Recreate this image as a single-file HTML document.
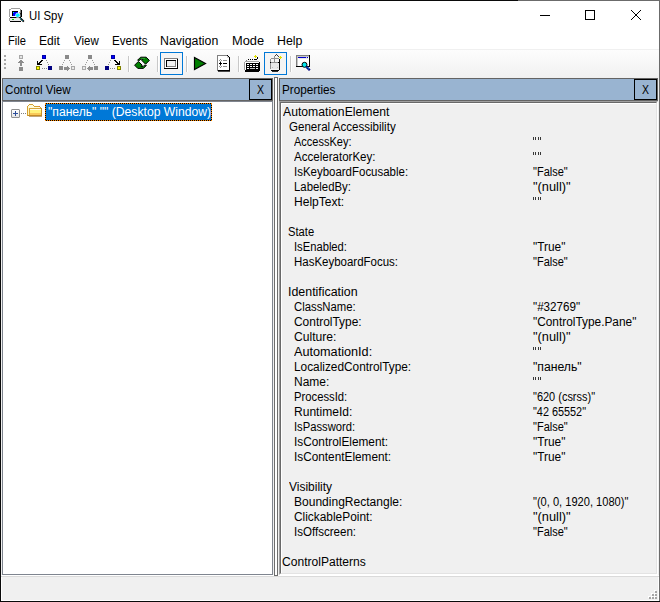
<!DOCTYPE html>
<html><head><meta charset="utf-8">
<style>
*{margin:0;padding:0;box-sizing:border-box}
html,body{width:660px;height:602px;overflow:hidden;background:#f0f0f0}
body{font-family:"Liberation Sans",sans-serif;font-size:11.5px;color:#000;position:relative}
.a{position:absolute}
.t{position:absolute;white-space:pre;line-height:15px}
.m{position:absolute;white-space:pre;font-size:12px;line-height:15px;top:33px}
svg{position:absolute;overflow:visible}
.q{position:absolute;white-space:pre;line-height:15px;font-size:12px;transform-origin:0 0}
</style></head><body>
<!-- title bar -->
<div class="a" style="left:0;top:0;width:660px;height:49px;background:#fff"></div>
<!-- title icon -->
<svg style="left:0;top:0" width="30" height="30" viewBox="0 0 30 30" shape-rendering="crispEdges">
 <path d="M11 8h9v1h1v1h-1v-1h-9v1h-1v7h-1v-8h1z" fill="#a0a0a0"/>
 <rect x="11" y="9" width="9" height="8" fill="#fff"/>
 <rect x="20" y="9" width="1" height="8" fill="#808080"/>
 <rect x="21" y="10" width="1" height="7" fill="#000"/>
 <rect x="12" y="11" width="6" height="5" fill="#0000ff"/>
 <rect x="12" y="11" width="6" height="1" fill="#000"/>
 <rect x="12" y="11" width="1" height="5" fill="#000"/>
 <rect x="13" y="12" width="1" height="1" fill="#00e0ff"/>
 <rect x="10" y="17" width="11" height="1" fill="#000"/>
 <rect x="9" y="18" width="12" height="3" fill="#e8e8e8"/>
 <rect x="9" y="18" width="1" height="3" fill="#a0a0a0"/>
 <rect x="10" y="21" width="11" height="1" fill="#000"/>
 <rect x="12" y="19" width="2" height="1" fill="#00d000"/>
</svg>
<svg style="left:0;top:0" width="30" height="30" viewBox="0 0 30 30">
 <circle cx="17.8" cy="15.3" r="2.3" fill="#00f0ff" stroke="#fff" stroke-width="0.6"/>
 <path d="M19.6 12.8 A2.9 2.9 0 0 1 20.2 17.6" stroke="#000" stroke-width="1" fill="none"/>
 <path d="M20.3 18.2 L23.8 21.7" stroke="#000" stroke-width="1.8"/>
 <path d="M20.5 18.4 L23.3 21.2" stroke="#00e0ff" stroke-width="1" stroke-dasharray="1 1"/>
 <path d="M19 16 L18 17" stroke="#c0c0c0" stroke-width="0.8" stroke-opacity="0.6"/>
</svg>
<!-- caption buttons -->
<div class="a" style="left:540px;top:15px;width:10px;height:1px;background:#000"></div>
<div class="a" style="left:585px;top:10px;width:10px;height:10px;border:1px solid #000"></div>
<svg style="left:631px;top:10px" width="10" height="10" viewBox="0 0 10 10"><path d="M0 0L10 10M10 0L0 10" stroke="#000" stroke-width="1"/></svg>
<!-- menu -->
<!-- toolbar -->
<div class="a" style="left:0;top:49px;width:660px;height:1px;background:#f0f0f0"></div>
<div class="a" style="left:0;top:50px;width:660px;height:27px;background:linear-gradient(#fdfdfd,#f1f1f1)"></div>
<svg style="left:0;top:0" width="330" height="80" viewBox="0 0 330 80" shape-rendering="crispEdges">
 <!-- grip -->
 <g fill="#a6a6a6"><rect x="4" y="55" width="2" height="2"/><rect x="4" y="59" width="2" height="2"/><rect x="4" y="63" width="2" height="2"/><rect x="4" y="67" width="2" height="2"/></g>
 <!-- icon1 parent (disabled) -->
 <rect x="19.5" y="55.5" width="3" height="3" fill="#e4e4e4" stroke="#a8a8a8"/>
 <g fill="#8c8c8c"><rect x="20" y="60" width="2" height="1"/><rect x="19" y="61" width="4" height="1"/><rect x="18" y="62" width="6" height="1"/><rect x="20" y="63" width="2" height="3"/></g>
 <rect x="19" y="67" width="4" height="4" fill="#8a8a8a"/>
 <!-- icon2 first child -->
 <rect x="42.5" y="55.5" width="3" height="3" fill="#0000ff" stroke="#0000a8"/>
 <g fill="#8a8a8a"><rect x="46" y="60" width="1" height="1"/><rect x="47" y="62" width="1" height="1"/><rect x="48" y="64" width="1" height="1"/><rect x="42" y="68" width="1" height="1"/><rect x="44" y="68" width="1" height="1"/><rect x="46" y="68" width="1" height="1"/></g>
 <g fill="#000"><rect x="41" y="60" width="2" height="1"/><rect x="40" y="61" width="2" height="1"/><rect x="39" y="62" width="2" height="1"/><rect x="38" y="63" width="2" height="1"/><rect x="37" y="61" width="1" height="4"/><rect x="37" y="64" width="5" height="1"/></g>
 <rect x="36.5" y="66.5" width="3" height="3" fill="#ffff00" stroke="#808000"/>
 <rect x="48" y="66" width="4" height="4" fill="#000080"/>
 <!-- icon3 next sibling (disabled) -->
 <rect x="65" y="55" width="4" height="4" fill="#8a8a8a"/>
 <g fill="#9a9a9a"><rect x="64" y="60" width="1" height="1"/><rect x="63" y="62" width="1" height="1"/><rect x="62" y="64" width="1" height="1"/><rect x="69" y="60" width="1" height="1"/><rect x="70" y="62" width="1" height="1"/><rect x="71" y="64" width="1" height="1"/></g>
 <rect x="59" y="66" width="4" height="4" fill="#8a8a8a"/>
 <rect x="71.5" y="66.5" width="3" height="3" fill="#e8e8e8" stroke="#a8a8a8"/>
 <path d="M64 67h3v-1h1v1h1v1h1v1h-1v1h-1v1h-1v-1h-3z" fill="#8c8c8c"/>
 <!-- icon4 prev sibling (disabled) -->
 <rect x="88" y="55" width="4" height="4" fill="#8a8a8a"/>
 <g fill="#9a9a9a"><rect x="87" y="60" width="1" height="1"/><rect x="86" y="62" width="1" height="1"/><rect x="85" y="64" width="1" height="1"/><rect x="92" y="60" width="1" height="1"/><rect x="93" y="62" width="1" height="1"/><rect x="94" y="64" width="1" height="1"/></g>
 <rect x="82.5" y="66.5" width="3" height="3" fill="#e8e8e8" stroke="#a8a8a8"/>
 <rect x="94" y="66" width="4" height="4" fill="#8a8a8a"/>
 <path d="M93 67h-3v-1h-1v1h-1v1h-1v1h1v1h1v1h1v-1h3z" fill="#8c8c8c"/>
 <!-- icon5 last child -->
 <rect x="111.5" y="55.5" width="3" height="3" fill="#0000ff" stroke="#0000a8"/>
 <g fill="#8a8a8a"><rect x="110" y="60" width="1" height="1"/><rect x="109" y="62" width="1" height="1"/><rect x="108" y="64" width="1" height="1"/><rect x="110" y="68" width="1" height="1"/><rect x="112" y="68" width="1" height="1"/><rect x="114" y="68" width="1" height="1"/></g>
 <g fill="#000"><rect x="114" y="60" width="2" height="1"/><rect x="115" y="61" width="2" height="1"/><rect x="116" y="62" width="2" height="1"/><rect x="117" y="63" width="2" height="1"/><rect x="119" y="61" width="1" height="4"/><rect x="115" y="64" width="5" height="1"/></g>
 <rect x="105" y="66" width="4" height="4" fill="#000080"/>
 <rect x="117.5" y="66.5" width="3" height="3" fill="#ffff00" stroke="#808000"/>
 <!-- separators -->
 <g fill="#c8c8c8"><rect x="128" y="56" width="1" height="16"/><rect x="157" y="56" width="1" height="16"/><rect x="186" y="56" width="1" height="16"/><rect x="238" y="56" width="1" height="16"/><rect x="290" y="56" width="1" height="16"/></g>
 <g fill="#fff"><rect x="129" y="56" width="1" height="16"/><rect x="158" y="56" width="1" height="16"/><rect x="187" y="56" width="1" height="16"/><rect x="239" y="56" width="1" height="16"/><rect x="291" y="56" width="1" height="16"/></g>
</svg>
<svg style="left:0;top:0" width="330" height="80" viewBox="0 0 330 80">
 <!-- refresh -->
 <path d="M137.6 60.2 L140.6 57.2 L146.2 57.2 L149.4 60.4 L145.6 64.2 L141.8 60.4 L143 59.2 L140.8 59.2 L139.6 60.4 Z" fill="#008000" stroke="#000" stroke-width="1"/>
 <path d="M146.4 65.4 L143.4 68.4 L137.8 68.4 L134.6 65.2 L138.4 61.4 L142.2 65.2 L141 66.4 L143.2 66.4 L144.4 65.2 Z" fill="#008000" stroke="#000" stroke-width="1"/>
 <path d="M141.2 58.4 L145 58.4" stroke="#40b040" stroke-width="0.8"/>
 <!-- play -->
 <path d="M194.5 57.5 L205.5 63.5 L194.5 69.5 Z" fill="#008000" stroke="#000" stroke-width="1.2"/>
</svg>
<svg style="left:0;top:0" width="330" height="80" viewBox="0 0 330 80" shape-rendering="crispEdges">
 <!-- checked buttons -->
 <rect x="160.5" y="52.5" width="22" height="22" fill="#f4f4f4" stroke="#0078d7"/>
 <rect x="264.5" y="52.5" width="22" height="22" fill="#f4f4f4" stroke="#0078d7"/>
 <!-- window icon -->
 <path d="M164 58h14v1h-13v10h-1z" fill="#808080"/>
 <path d="M177 59h1v10h-14v-1h13z" fill="#000"/>
 <rect x="165" y="59" width="12" height="9" fill="#fff"/>
 <path d="M166 60h10v1h-9v6h-1z" fill="#000"/>
 <path d="M175 61h1v6h-9v-1h8z" fill="#808080"/>
 <rect x="167" y="61" width="8" height="5" fill="#f0f0f0"/>
 <!-- document -->
 <rect x="217" y="55" width="10" height="1" fill="#808080"/>
 <rect x="217" y="55" width="1" height="16" fill="#808080"/>
 <rect x="218" y="56" width="11" height="14" fill="#fff"/>
 <rect x="227" y="56" width="1" height="2" fill="#d0d0d0"/>
 <rect x="228" y="57" width="1" height="1" fill="#d0d0d0"/>
 <g fill="#000"><rect x="227" y="55" width="1" height="1"/><rect x="228" y="56" width="1" height="1"/><rect x="229" y="57" width="1" height="1"/></g>
 <rect x="229" y="58" width="1" height="13" fill="#000"/>
 <rect x="218" y="70" width="12" height="1" fill="#000"/>
 <rect x="218" y="71" width="12" height="1" fill="#202020" fill-opacity="0.8"/>
 <g fill="#909090"><rect x="220" y="59" width="1" height="1"/><rect x="219" y="60" width="1" height="1"/><rect x="221" y="60" width="1" height="1"/><rect x="220" y="61" width="1" height="1"/><rect x="220" y="65" width="1" height="1"/><rect x="219" y="66" width="1" height="1"/><rect x="221" y="66" width="1" height="1"/><rect x="220" y="67" width="1" height="1"/></g>
 <path d="M220 62h1v1h1v1h-1v1h-1v-1h-1v-1h1z" fill="#000"/>
 <rect x="223" y="60" width="4" height="1" fill="#909090"/>
 <rect x="223" y="63" width="4" height="1" fill="#000"/>
 <rect x="223" y="66" width="4" height="1" fill="#909090"/>
 <!-- keyboard -->
 <rect x="245" y="61" width="14" height="1" fill="#a0a0a0"/>
 <rect x="244" y="62" width="1" height="8" fill="#a0a0a0"/>
 <rect x="245" y="62" width="14" height="8" fill="#fff"/>
 <rect x="259" y="62" width="1" height="9" fill="#000"/>
 <rect x="245" y="70" width="14" height="2" fill="#000"/>
 <rect x="246" y="63" width="13" height="7" fill="#000"/>
 <g fill="#fff"><rect x="247" y="64" width="2" height="1"/><rect x="250" y="64" width="2" height="1"/><rect x="253" y="64" width="2" height="1"/><rect x="256" y="64" width="2" height="1"/><rect x="247" y="66" width="2" height="1"/><rect x="250" y="66" width="2" height="1"/><rect x="253" y="66" width="2" height="1"/><rect x="256" y="66" width="2" height="1"/><rect x="247" y="68" width="2" height="1"/><rect x="250" y="68" width="5" height="1" fill="#c0c0c0"/><rect x="256" y="68" width="2" height="1"/></g>
 <g fill="#000"><rect x="248" y="59" width="1" height="1"/><rect x="250" y="59" width="1" height="1"/><rect x="252" y="59" width="1" height="1"/><rect x="254" y="59" width="3" height="1"/><rect x="257" y="58" width="1" height="1"/><rect x="257" y="57" width="1" height="1"/></g>
 <rect x="246" y="60" width="1" height="1" fill="#808080"/>
 <path d="M255 55h1v1h1v1h-1v1h-1v-1h-1v-1h1z" fill="#e0e000"/>
 <!-- mouse -->
 <rect x="271" y="58" width="8" height="1" fill="#909090"/>
 <rect x="270" y="59" width="1" height="10" fill="#909090"/>
 <rect x="271" y="59" width="8" height="11" fill="#f4f4f4"/>
 <rect x="271" y="63" width="8" height="6" fill="#e8e8e8"/>
 <rect x="272" y="67" width="1" height="1" fill="#c0c0c0"/>
 <rect x="277" y="67" width="1" height="1" fill="#c0c0c0"/>
 <rect x="279" y="59" width="1" height="11" fill="#000"/>
 <rect x="271" y="70" width="8" height="1" fill="#000"/>
 <rect x="272" y="71" width="6" height="1" fill="#303030"/>
 <rect x="271" y="62" width="8" height="1" fill="#909090"/>
 <rect x="270" y="62" width="1" height="1" fill="#000"/>
 <rect x="278" y="62" width="1" height="1" fill="#000"/>
 <rect x="274" y="56" width="1" height="6" fill="#909090"/>
 <g fill="#404040"><rect x="275" y="55" width="1" height="1"/><rect x="276" y="54" width="1" height="1"/><rect x="277" y="55" width="1" height="1"/><rect x="278" y="56" width="1" height="1"/></g>
 <path d="M280 56h1v1h1v1h-1v1h-1v-1h-1v-1h1z" fill="#e0e000"/>
 <!-- window magnifier -->
 <rect x="296" y="55" width="14" height="1" fill="#808080"/>
 <rect x="296" y="55" width="1" height="12" fill="#808080"/>
 <rect x="297" y="56" width="12" height="1" fill="#c8c8c8"/>
 <rect x="297" y="56" width="1" height="10" fill="#c8c8c8"/>
 <rect x="298" y="57" width="11" height="9" fill="#fff"/>
 <rect x="309" y="55" width="1" height="12" fill="#000"/>
 <rect x="296" y="66" width="14" height="1" fill="#000"/>
 <rect x="298" y="57" width="10" height="1" fill="#0000c8"/>
 <rect x="306" y="57" width="1" height="1" fill="#c0c0ff"/>
 <rect x="299" y="58" width="9" height="1" fill="#e8e8e8"/>
</svg>
<svg style="left:0;top:0" width="330" height="80" viewBox="0 0 330 80">
 <circle cx="304.5" cy="64.8" r="2.5" fill="#00e8f0" stroke="#000" stroke-width="1"/>
 <path d="M306.2 66.6 L309.8 70.2" stroke="#000080" stroke-width="2.2"/>
 <path d="M306.6 67 L309.4 69.8" stroke="#00e0ff" stroke-width="1" stroke-dasharray="1 1"/>
</svg>

<!-- status bar -->
<div class="a" style="left:1px;top:575px;width:658px;height:1px;background:#fff"></div>
<div class="a" style="left:1px;top:576px;width:658px;height:1px;background:#dadada"></div>
<div class="a" style="left:1px;top:577px;width:1px;height:23px;background:#fff"></div>
<div class="a" style="left:1px;top:600px;width:658px;height:1px;background:#fff"></div>
<div class="a" style="left:658px;top:577px;width:1px;height:24px;background:#fff"></div>
<svg style="left:0;top:0" width="660" height="602" viewBox="0 0 660 602" shape-rendering="crispEdges">
<g fill="#fff"><rect x="654" y="590" width="2" height="2"/><rect x="651" y="593" width="2" height="2"/><rect x="654" y="593" width="2" height="2"/><rect x="648" y="596" width="2" height="2"/><rect x="651" y="596" width="2" height="2"/><rect x="654" y="596" width="2" height="2"/></g>
<g fill="#a6a6a6"><rect x="655" y="591" width="2" height="2"/><rect x="652" y="594" width="2" height="2"/><rect x="655" y="594" width="2" height="2"/><rect x="649" y="597" width="2" height="2"/><rect x="652" y="597" width="2" height="2"/><rect x="655" y="597" width="2" height="2"/></g>
</svg>
<!-- window border -->
<div class="a" style="left:0;top:0;width:518px;height:1px;background:#0a0a0a"></div>
<div class="a" style="left:518px;top:0;width:142px;height:1px;background:#6b6b6b"></div>
<div class="a" style="left:0;top:0;width:1px;height:602px;background:#0a0a0a"></div>
<div class="a" style="left:659px;top:0;width:1px;height:602px;background:#6b6b6b"></div>
<div class="a" style="left:0;top:601px;width:660px;height:1px;background:#0a0a0a"></div>
<!-- left panel -->
<div class="a" style="left:2px;top:101px;width:271px;height:474px;border:1px solid #7f858f;background:#fff"></div>
<div class="a" style="left:2px;top:78px;width:271px;height:23px;background:#99b4d1;border:1px solid #646464"></div>
<div class="a" style="left:249px;top:79px;width:23px;height:21px;border:1px solid #000"></div>
<!-- splitter -->
<div class="a" style="left:274px;top:77px;width:4px;height:499px;border:1px solid #6e6e6e;background:#fff"></div>
<!-- right panel -->
<div class="a" style="left:279px;top:78px;width:379px;height:23px;background:#99b4d1;border:1px solid #646464"></div>
<div class="a" style="left:279px;top:101px;width:379px;height:474px;border:1px solid;border-color:#a0a0a0 #fff #fff #a0a0a0;background:#f0f0f0"></div>
<div class="a" style="left:280px;top:102px;width:377px;height:472px;border:1px solid;border-color:#696969 #e3e3e3 #e3e3e3 #696969"></div>
<div class="a" style="left:281px;top:103px;width:375px;height:470px;border-left:1px solid #fff;border-top:1px solid #fff"></div>
<div class="a" style="left:634px;top:79px;width:23px;height:21px;border:1px solid #000"></div>
<div class="t" style="left:28.50px;top:9px;font-size:12px;transform:scaleX(0.9478);transform-origin:0 0">UI Spy</div>
<div class="t" style="left:8.00px;top:34px;font-size:12px;transform:scaleX(0.9300);transform-origin:0 0">File</div>
<div class="t" style="left:38.50px;top:34px;font-size:12px;transform:scaleX(1.0042);transform-origin:0 0">Edit</div>
<div class="t" style="left:74.00px;top:34px;font-size:12px;transform:scaleX(0.9569);transform-origin:0 0">View</div>
<div class="t" style="left:111.60px;top:34px;font-size:12px;transform:scaleX(0.9692);transform-origin:0 0">Events</div>
<div class="t" style="left:159.60px;top:34px;font-size:12px;transform:scaleX(1.0286);transform-origin:0 0">Navigation</div>
<div class="t" style="left:231.60px;top:34px;font-size:12px;transform:scaleX(1.0702);transform-origin:0 0">Mode</div>
<div class="t" style="left:276.50px;top:34px;font-size:12px;transform:scaleX(1.0293);transform-origin:0 0">Help</div>
<div class="t" style="left:5.20px;top:83px;font-size:12px;transform:scaleX(0.9685);transform-origin:0 0">Control View</div>
<div class="t" style="left:257.00px;top:83px;font-size:12px;transform:scaleX(0.8750);transform-origin:0 0">X</div>
<div class="t" style="left:282.20px;top:83px;font-size:12px;transform:scaleX(0.9774);transform-origin:0 0">Properties</div>
<div class="t" style="left:642.00px;top:83px;font-size:12px;transform:scaleX(0.8750);transform-origin:0 0">X</div>
<!-- tree -->
<div class="a" style="left:11px;top:109px;width:9px;height:9px;border:1px solid #8f8f8f;border-radius:1px;background:linear-gradient(#fff,#e4e4e4)"></div>
<div class="a" style="left:13px;top:113px;width:5px;height:1px;background:#2d4e9a"></div>
<div class="a" style="left:15px;top:111px;width:1px;height:5px;background:#2d4e9a"></div>
<div class="a" style="left:21px;top:113px;width:1px;height:1px;background:#808080"></div>
<div class="a" style="left:23px;top:113px;width:1px;height:1px;background:#808080"></div>
<div class="a" style="left:25px;top:113px;width:1px;height:1px;background:#808080"></div>
<svg style="left:27px;top:104px" width="16" height="14" viewBox="0 0 16 14" shape-rendering="crispEdges">
 <rect x="2" y="1" width="4" height="1" fill="#fffbe0"/>
 <rect x="1" y="2" width="12" height="2" fill="#fffbd8"/>
 <rect x="1" y="4" width="1" height="8" fill="#fff6b8"/>
 <g fill="#d4a030"><rect x="2" y="0" width="4" height="1"/><rect x="1" y="1" width="1" height="1"/><rect x="6" y="1" width="1" height="1"/><rect x="0" y="2" width="1" height="10"/><rect x="7" y="2" width="6" height="1"/><rect x="13" y="3" width="1" height="1"/></g>
 <rect x="12" y="2" width="1" height="1" fill="#e07040"/>
 <rect x="2" y="4" width="13" height="1" fill="#d8a438"/>
 <rect x="2" y="4" width="1" height="8" fill="#d8a438"/>
 <rect x="14" y="4" width="1" height="8" fill="#c89028"/>
 <rect x="3" y="5" width="11" height="1" fill="#fffce8"/>
 <rect x="3" y="6" width="11" height="3" fill="#fff27a"/>
 <rect x="3" y="9" width="11" height="2" fill="#f8c858"/>
 <rect x="1" y="11" width="14" height="1" fill="#c48a24"/>
 <rect x="2" y="12" width="13" height="1" fill="#a88040" fill-opacity="0.7"/>
</svg>
<div class="a" style="left:45px;top:103px;width:167px;height:18px;background:#0078d7;border:1px solid #000"></div>
<div class="a" style="left:45px;top:103px;width:167px;height:18px;border:1px dotted #ff8a00"></div>
<div class="t" style="left:48px;top:105px;color:#fff;font-size:12px;transform:scaleX(1.012);transform-origin:0 0">"панель" "" (Desktop Window)</div>
<!-- properties -->
<div class="q" style="left:282.50px;top:105px;transform:scaleX(1.0155)">AutomationElement</div>
<div class="q" style="left:288.50px;top:120px;transform:scaleX(0.9634)">General Accessibility</div>
<div class="q" style="left:294.00px;top:135px;transform:scaleX(0.9173)">AccessKey:</div>
<div class="q" style="left:294.00px;top:150px;transform:scaleX(0.9624)">AcceleratorKey:</div>
<div class="q" style="left:293.54px;top:165px;transform:scaleX(0.9554)">IsKeyboardFocusable:</div>
<div class="q" style="left:293.50px;top:180px;transform:scaleX(0.9470)">LabeledBy:</div>
<div class="q" style="left:293.50px;top:195px;transform:scaleX(1.0035)">HelpText:</div>
<div class="q" style="left:287.50px;top:225px;transform:scaleX(0.9314)">State</div>
<div class="q" style="left:293.57px;top:240px;transform:scaleX(0.9337)">IsEnabled:</div>
<div class="q" style="left:293.50px;top:255px;transform:scaleX(0.9570)">HasKeyboardFocus:</div>
<div class="q" style="left:288.45px;top:285px;transform:scaleX(1.0332)">Identification</div>
<div class="q" style="left:294.00px;top:300px;transform:scaleX(0.9429)">ClassName:</div>
<div class="q" style="left:294.00px;top:315px;transform:scaleX(0.9941)">ControlType:</div>
<div class="q" style="left:294.00px;top:330px;transform:scaleX(1.0095)">Culture:</div>
<div class="q" style="left:294.00px;top:345px;transform:scaleX(1.0558)">AutomationId:</div>
<div class="q" style="left:293.50px;top:360px;transform:scaleX(0.9867)">LocalizedControlType:</div>
<div class="q" style="left:293.50px;top:375px;transform:scaleX(0.9995)">Name:</div>
<div class="q" style="left:293.50px;top:390px;transform:scaleX(0.9379)">ProcessId:</div>
<div class="q" style="left:293.50px;top:405px;transform:scaleX(1.0049)">RuntimeId:</div>
<div class="q" style="left:293.56px;top:420px;transform:scaleX(0.9356)">IsPassword:</div>
<div class="q" style="left:293.51px;top:435px;transform:scaleX(0.9868)">IsControlElement:</div>
<div class="q" style="left:293.52px;top:450px;transform:scaleX(0.9837)">IsContentElement:</div>
<div class="q" style="left:288.50px;top:480px;transform:scaleX(0.9971)">Visibility</div>
<div class="q" style="left:293.50px;top:495px;transform:scaleX(1.0030)">BoundingRectangle:</div>
<div class="q" style="left:294.00px;top:510px;transform:scaleX(0.9907)">ClickablePoint:</div>
<div class="q" style="left:293.54px;top:525px;transform:scaleX(0.9630)">IsOffscreen:</div>
<div class="q" style="left:282.10px;top:555px;transform:scaleX(1.0057)">ControlPatterns</div>
<div class="a" style="left:533px;top:137px;width:1px;height:3px;background:#383838"></div>
<div class="a" style="left:535px;top:137px;width:1px;height:3px;background:#383838"></div>
<div class="a" style="left:538px;top:137px;width:1px;height:3px;background:#383838"></div>
<div class="a" style="left:540px;top:137px;width:1px;height:3px;background:#383838"></div>
<div class="a" style="left:533px;top:152px;width:1px;height:3px;background:#383838"></div>
<div class="a" style="left:535px;top:152px;width:1px;height:3px;background:#383838"></div>
<div class="a" style="left:538px;top:152px;width:1px;height:3px;background:#383838"></div>
<div class="a" style="left:540px;top:152px;width:1px;height:3px;background:#383838"></div>
<div class="q" style="left:532.50px;top:165px;transform:scaleX(0.9179)">"False"</div>
<div class="q" style="left:532.50px;top:180px;transform:scaleX(1.0678)">"(null)"</div>
<div class="a" style="left:533px;top:197px;width:1px;height:3px;background:#383838"></div>
<div class="a" style="left:535px;top:197px;width:1px;height:3px;background:#383838"></div>
<div class="a" style="left:538px;top:197px;width:1px;height:3px;background:#383838"></div>
<div class="a" style="left:540px;top:197px;width:1px;height:3px;background:#383838"></div>
<div class="q" style="left:532.50px;top:240px;transform:scaleX(0.9880)">"True"</div>
<div class="q" style="left:532.50px;top:255px;transform:scaleX(0.9179)">"False"</div>
<div class="q" style="left:532.50px;top:300px;transform:scaleX(0.9685)">"#32769"</div>
<div class="q" style="left:532.50px;top:315px;transform:scaleX(0.9883)">"ControlType.Pane"</div>
<div class="q" style="left:532.50px;top:330px;transform:scaleX(1.0678)">"(null)"</div>
<div class="a" style="left:533px;top:347px;width:1px;height:3px;background:#383838"></div>
<div class="a" style="left:535px;top:347px;width:1px;height:3px;background:#383838"></div>
<div class="a" style="left:538px;top:347px;width:1px;height:3px;background:#383838"></div>
<div class="a" style="left:540px;top:347px;width:1px;height:3px;background:#383838"></div>
<div class="q" style="left:532.50px;top:360px;transform:scaleX(1.0171)">"панель"</div>
<div class="a" style="left:533px;top:377px;width:1px;height:3px;background:#383838"></div>
<div class="a" style="left:535px;top:377px;width:1px;height:3px;background:#383838"></div>
<div class="a" style="left:538px;top:377px;width:1px;height:3px;background:#383838"></div>
<div class="a" style="left:540px;top:377px;width:1px;height:3px;background:#383838"></div>
<div class="q" style="left:532.50px;top:390px;transform:scaleX(0.9140)">"620 (csrss)"</div>
<div class="q" style="left:532.50px;top:405px;transform:scaleX(0.9052)">"42 65552"</div>
<div class="q" style="left:532.50px;top:420px;transform:scaleX(0.9179)">"False"</div>
<div class="q" style="left:532.50px;top:435px;transform:scaleX(0.9880)">"True"</div>
<div class="q" style="left:532.50px;top:450px;transform:scaleX(0.9880)">"True"</div>
<div class="q" style="left:532.50px;top:495px;transform:scaleX(0.9234)">"(0, 0, 1920, 1080)"</div>
<div class="q" style="left:532.50px;top:510px;transform:scaleX(1.0678)">"(null)"</div>
<div class="q" style="left:532.50px;top:525px;transform:scaleX(0.9179)">"False"</div>
</body></html>
